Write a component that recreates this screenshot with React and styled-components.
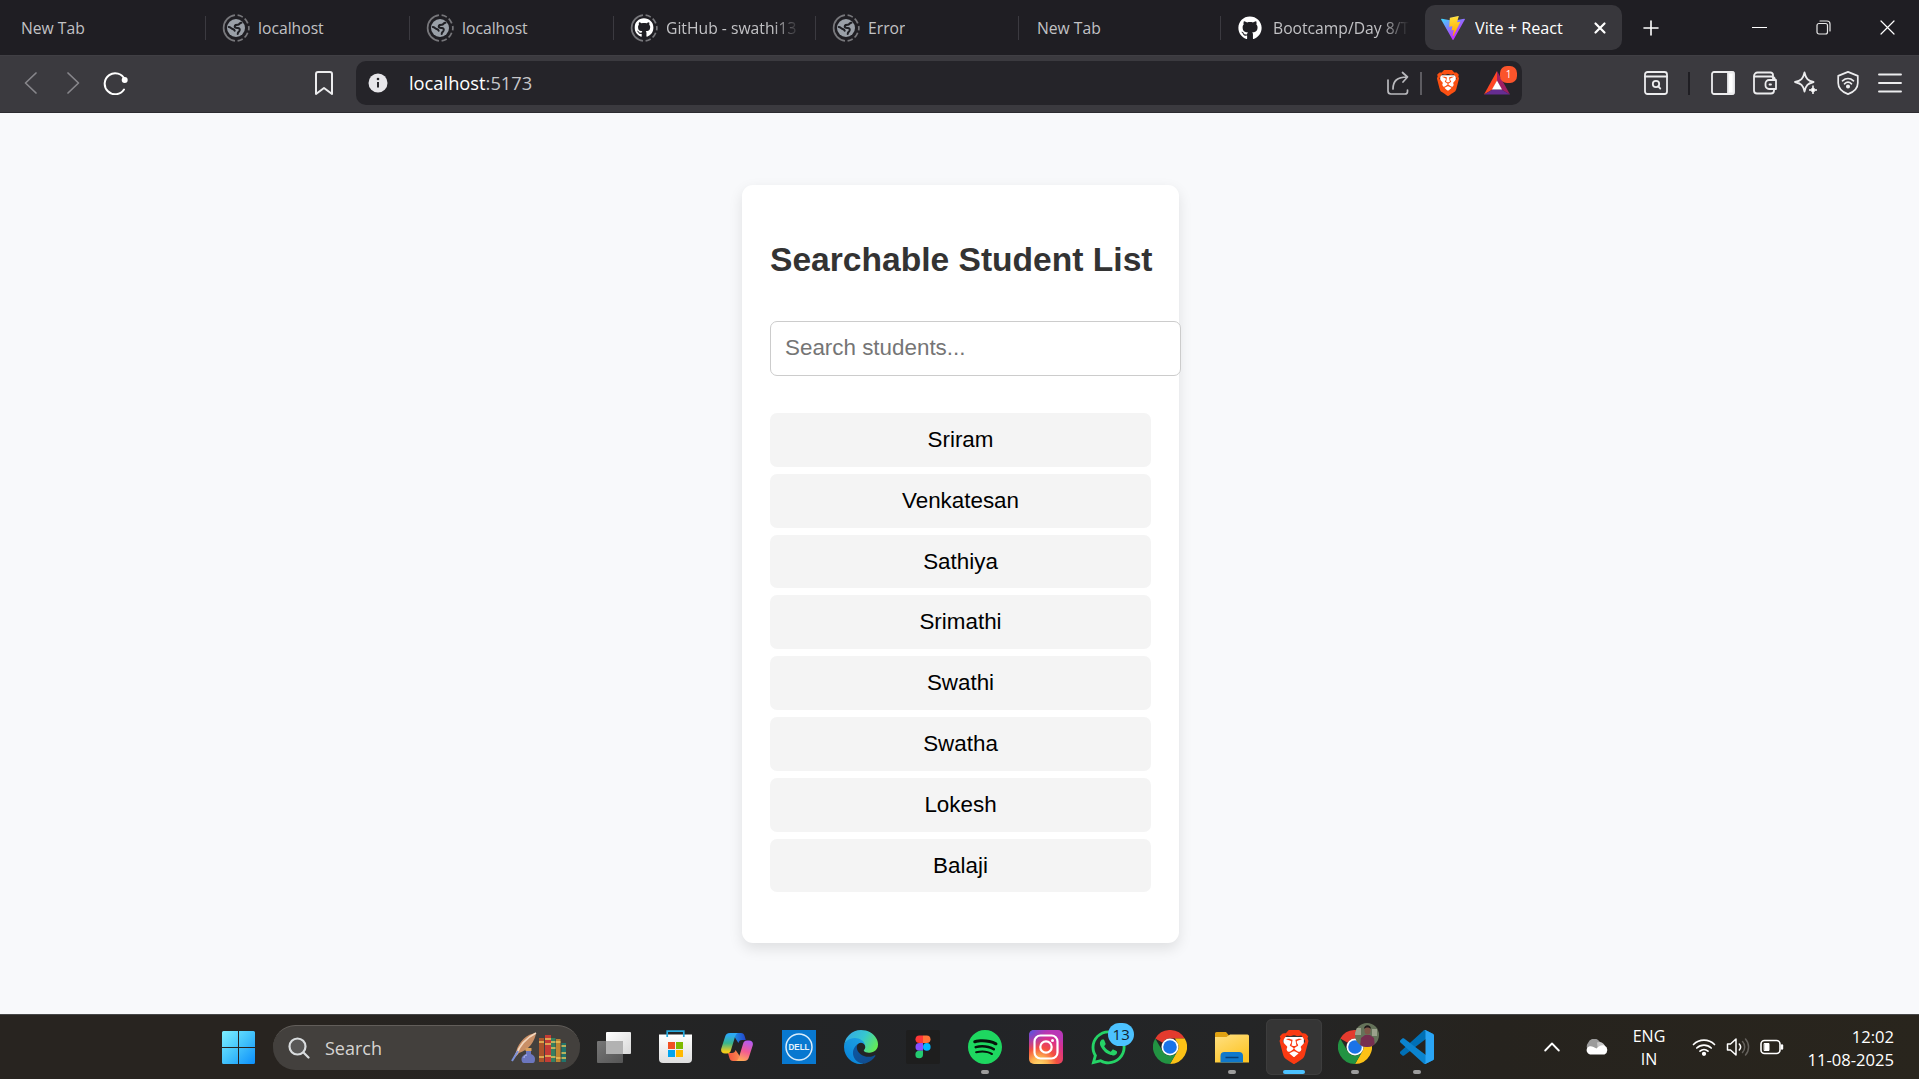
import React, { useState } from "react";
import styled, { createGlobalStyle, css } from "styled-components";
import { FaGithub, FaWhatsapp } from "react-icons/fa";
import { SiBrave, SiSpotify } from "react-icons/si";

const GlobalStyle = createGlobalStyle`
  * { box-sizing: border-box; }
  body { margin: 0; overflow: hidden; }
  svg { display: block; flex-shrink: 0; }
`;

const Screen = styled.div`
  width: 1919px;
  height: 1079px;
  display: flex;
  flex-direction: column;
  background: #f8f9fb;
  font-family: "Open Sans", "Noto Sans", sans-serif;
  overflow: hidden;
`;

/* ---------- Browser tabs ---------- */

const TabStrip = styled.div`
  height: 55px;
  flex-shrink: 0;
  display: flex;
  align-items: center;
  background: #1f1e23;
`;

const Tab = styled.div`
  width: ${(p) => p.$width || 203}px;
  height: 24px;
  flex-shrink: 0;
  display: flex;
  align-items: center;
  padding-left: ${(p) => p.$inset || 16}px;
  gap: ${(p) => p.$gap || 8}px;
  border-right: ${(p) => (p.$last ? "0" : "1px solid #3b3a40")};
  color: #c2c2c5;
`;

const fade = css`
  mask-image: linear-gradient(90deg, #000 80%, transparent 100%);
`;

const TabTitle = styled.span`
  font-size: 15.7px;
  line-height: 24px;
  white-space: nowrap;
  overflow: hidden;
  width: ${(p) => (p.$width ? `${p.$width}px` : "auto")};
  ${(p) => p.$width && fade}
`;

const ActiveTab = styled.div`
  width: 197px;
  height: 45px;
  margin-left: 1px;
  padding: 0 14px 0 16px;
  display: flex;
  align-items: center;
  gap: 10px;
  border-radius: 10px;
  background: #38373c;
  color: #fff;
  span { font-size: 16.2px; }
  svg:last-child { margin-left: auto; }
`;

const NewTabButton = styled.div`
  width: 58px;
  display: flex;
  justify-content: center;
`;

const WindowControls = styled.div`
  margin-left: auto;
  display: flex;
  > div { width: 64px; height: 40px; display: flex; align-items: center; justify-content: center; }
`;

/* ---------- Address toolbar ---------- */

const Toolbar = styled.div`
  height: 58px;
  flex-shrink: 0;
  display: flex;
  align-items: center;
  background: #3b3a3f;
  border-top: 1px solid #403f44;
  border-bottom: 1px solid #2c2b30;
  padding: 0 17px 2px 19px;
`;

const NavButtons = styled.div`
  display: flex;
  align-items: center;
  gap: 18px;
`;

const BookmarkSlot = styled.div`
  margin-left: 184.5px;
`;

const AddressBar = styled.div`
  width: 1166px;
  height: 44px;
  margin-left: 21.5px;
  padding: 0 12px 0 12px;
  display: flex;
  align-items: center;
  border-radius: 10px;
  background: #252429;
`;

const Url = styled.span`
  margin-left: 21px;
  font-size: 18.3px;
  line-height: 24px;
  color: #fff;
  em { font-style: normal; color: #c7c7ca; }
`;

const AddressActions = styled.div`
  margin-left: auto;
  display: flex;
  align-items: center;
`;

const ThinRule = styled.div`
  width: ${(p) => p.$thick || 1}px;
  height: 23px;
  margin: 0 ${(p) => p.$right}px 0 ${(p) => p.$left}px;
  background: ${(p) => p.$color};
`;

const BatIcon = styled.div`
  position: relative;
  margin-left: 23px;
  width: 26px;
  height: 24px;
`;

const BatBadge = styled.span`
  position: absolute;
  top: -5px;
  right: -7px;
  width: 17px;
  height: 17px;
  border-radius: 7px;
  background: #fb542b;
  color: #fff;
  font-size: 10px;
  line-height: 17px;
  text-align: center;
`;

const ToolbarActions = styled.div`
  margin-left: auto;
  display: flex;
  align-items: center;
`;

const ActionIcons = styled.div`
  display: flex;
  align-items: center;
  gap: 17.8px;
`;

/* ---------- Page ---------- */

const Page = styled.main`
  flex: 1;
  display: flex;
  justify-content: center;
  align-items: flex-start;
  padding: 72px 0 0 2px;
  background: #f8f9fb;
  font-family: "Liberation Sans", Arial, sans-serif;
`;

const Card = styled.section`
  width: 437px;
  height: 758px;
  padding: 55px 28px 0;
  border-radius: 11px;
  background: #fff;
  box-shadow: 0 5.6px 14px rgba(0, 0, 0, 0.1);
`;

const Heading = styled.h2`
  margin: 0;
  font-size: 33.6px;
  line-height: 40px;
  letter-spacing: 0;
  color: #333;
  text-align: center;
  white-space: nowrap;
`;

const SearchInput = styled.input`
  display: block;
  width: 411px;
  height: 55px;
  margin: 41px 0 37px;
  padding: 0 14px 1px;
  border: 1px solid #ccc;
  border-radius: 7px;
  background: #fff;
  font: 22.4px "Liberation Sans", Arial, sans-serif;
  color: #000;
  outline: none;
  &::placeholder { color: #757575; }
`;

const StudentList = styled.ul`
  margin: 0;
  padding: 0;
  list-style: none;
  display: flex;
  flex-direction: column;
  gap: 7px;
`;

const Student = styled.li`
  height: 53.8px;
  border-radius: 7px;
  background: #f4f4f4;
  font-size: 22.4px;
  line-height: 53px;
  text-align: center;
  color: #000;
`;

/* ---------- Taskbar ---------- */

const Taskbar = styled.footer`
  height: 65px;
  flex-shrink: 0;
  display: flex;
  align-items: center;
  padding: 0 25px 0 222px;
  border-top: 1px solid #474747;
  background: linear-gradient(90deg, #282420 0%, #282420 17%, #242424 32%, #222427 50%, #242526 65%, #26231e 78%, #29251d 100%);
  color: #fff;
`;

const SearchPill = styled.div`
  width: 307px;
  height: 45px;
  margin-left: 18px;
  padding: 0 13px 0 15px;
  display: flex;
  align-items: center;
  gap: 15px;
  border-radius: 23px;
  border-top: 1px solid #625e5a;
  background: #43403d;
  color: #d6d4d2;
  font-size: 18px;
  svg:last-child { margin-left: auto; }
`;

const Apps = styled.div`
  display: flex;
  margin-left: 3px;
`;

const AppSlot = styled.div`
  position: relative;
  width: 55.8px;
  height: 56px;
  margin: 0 3px;
  display: flex;
  align-items: center;
  justify-content: center;
  border-radius: 6px;
  background: ${(p) => (p.$active ? "#353535" : "transparent")};
  box-shadow: ${(p) => (p.$active ? "inset 0 0 0 1px #3d3d3d" : "none")};
`;

const RunningMark = styled.span`
  position: absolute;
  bottom: 1px;
  left: 50%;
  transform: translateX(-50%);
  width: ${(p) => (p.$wide ? 22 : 8)}px;
  height: 4px;
  border-radius: 2px;
  background: ${(p) => (p.$wide ? "#4cc2ff" : "#9d9d9d")};
`;

const CountBadge = styled.span`
  position: absolute;
  top: 4px;
  right: 2px;
  width: 26px;
  height: 23px;
  border-radius: 12px;
  background: #4cc2ff;
  color: #12222c;
  font-size: 15px;
  line-height: 22px;
  text-align: center;
`;

const Avatar = styled.svg`
  position: absolute;
  top: 4px;
  right: 4px;
`;

const BraveLogo = styled.div`
  position: relative;
  display: flex;
  width: ${(p) => p.$size}px;
  height: ${(p) => p.$size}px;
  color: ${(p) => p.$color};
  &::before {
    content: "";
    position: absolute;
    inset: 20% 20% 14%;
    background: #fff;
    clip-path: polygon(0 0, 100% 0, 100% 50%, 50% 100%, 0 50%);
  }
  svg { position: relative; }
`;

const Tray = styled.div`
  margin-left: auto;
  display: flex;
  align-items: center;
`;

const Overflow = styled.div`
  margin-right: 25px;
`;

const TwoLines = styled.div`
  width: ${(p) => p.$width}px;
  margin-left: ${(p) => p.$left}px;
  padding-top: 2px;
  font-size: ${(p) => p.$size || 16}px;
  line-height: 23px;
  text-align: ${(p) => p.$align};
  white-space: nowrap;
`;

const TrayIcons = styled.div`
  display: flex;
  align-items: center;
  gap: 10px;
  margin-left: 26px;
`;

/* ---------- Icons ---------- */

const Stroke = ({ w = 24, h = 24, color = "#ececee", sw = 1.8, children, ...rest }) => (
  <svg width={w} height={h} viewBox={`0 0 ${w} ${h}`} fill="none" stroke={color} strokeWidth={sw} strokeLinecap="round" strokeLinejoin="round" {...rest}>
    {children}
  </svg>
);

const Ring = () => (
  <g fill="none" stroke="#77777b" strokeWidth="1.7">
    <path d="M13 1.1A13 13 0 0 0 13 26.9" />
    <path d="M15.6 1.2a13 13 0 0 1 5.2 1.9M22.7 4.6a13 13 0 0 1 3.1 4.8M26.7 12a13 13 0 0 1 0 4.3M25.7 18.8a13 13 0 0 1-3.1 4.7M20.7 25a13 13 0 0 1-5.1 1.9" />
  </g>
);

const GlobeFavicon = () => (
  <svg width="28" height="28" viewBox="0 0 28 28">
    <Ring />
    <circle cx="14" cy="14" r="9" fill="#9aa0a8" />
    <g fill="none" stroke="#202025" strokeWidth="2" strokeLinecap="round" strokeLinejoin="round">
      <path d="M19.500 8.800c-1.800-.4-2 1.900-3.500 1.900-1.800 0-3.300.3-3.300 1.800s1.800 1.300 3.300 1.500c1.900.3 2.200 1.800 1.400 3-.8 1.100-1.600 1.400-1.700 3" />
      <path d="M6.800 13c1.700 0 2 1.200 3.300 1.800 1.300.5 2.300.6 2.600 1.900" />
    </g>
  </svg>
);

const GithubRing = () => (
  <svg width="28" height="28" viewBox="0 0 28 28">
    <Ring />
    <FaGithub x="4.3" y="4" size={19.5} color="#fff" />
  </svg>
);

const ViteIcon = () => (
  <svg width="24" height="24" viewBox="0 0 256 257">
    <defs>
      <linearGradient id="viteA" x1="0%" x2="57%" y1="8%" y2="79%"><stop offset="0" stopColor="#41d1ff" /><stop offset="1" stopColor="#bd34fe" /></linearGradient>
      <linearGradient id="viteB" x1="43%" x2="50%" y1="2%" y2="89%"><stop offset="0" stopColor="#ffea83" /><stop offset=".08" stopColor="#ffdd35" /><stop offset="1" stopColor="#ffa800" /></linearGradient>
    </defs>
    <path fill="url(#viteA)" d="M255.153 37.938L134.897 252.976c-2.483 4.44-8.862 4.466-11.382.048L.875 37.958c-2.746-4.814 1.371-10.646 6.827-9.67l120.385 21.517a6.537 6.537 0 0 0 2.322-.004l117.867-21.483c5.438-.991 9.574 4.796 6.877 9.62Z" />
    <path fill="url(#viteB)" d="M185.432.063L96.44 17.501a3.268 3.268 0 0 0-2.634 3.014l-5.474 92.456a3.268 3.268 0 0 0 3.997 3.378l24.777-5.718c2.318-.535 4.413 1.507 3.936 3.838l-7.361 36.047c-.495 2.426 1.782 4.5 4.151 3.78l15.304-4.649c2.372-.72 4.652 1.36 4.15 3.788l-11.698 56.621c-.732 3.542 3.979 5.473 5.943 2.437l1.313-2.028l72.516-144.72c1.215-2.423-.88-5.186-3.54-4.672l-25.505 4.922c-2.396.462-4.435-1.77-3.759-4.114l16.646-57.705c.677-2.35-1.37-4.583-3.769-4.113Z" />
  </svg>
);

const WindowsLogo = () => (
  <svg width="33" height="33" viewBox="0 0 33 33">
    <defs><linearGradient id="win" gradientUnits="userSpaceOnUse" x1="0" y1="0" x2="33" y2="33"><stop stopColor="#7df0ff" /><stop offset=".5" stopColor="#43c3fb" /><stop offset="1" stopColor="#0c8ffc" /></linearGradient></defs>
    <path fill="url(#win)" d="M1.5 0H16v16H0V1.500a1.500 1.500 0 0 1 1.500-1.500zM17 0h14.500a1.500 1.500 0 0 1 1.500 1.500V16H17zM0 17h16v16H1.500a1.500 1.500 0 0 1-1.500-1.500zM17 17h16v14.500a1.500 1.500 0 0 1-1.500 1.500H17z" />
  </svg>
);

const QuillAndBooks = () => (
  <svg width="56" height="32" viewBox="0 0 56 32">
    <path d="M1 29L5 20C8 9 16 2 25 1c-1 8-7 17-17 20z" fill="#c98f66" />
    <path d="M25 1C15 6 8 15 5 23" stroke="#f2d6be" strokeWidth="1.800" fill="none" />
    <path d="M1 29l6-10" stroke="#7b90d8" strokeWidth="2" />
    <rect x="14.500" y="16" width="6" height="3" fill="#d9a05c" />
    <path d="M15 19h5v3c3 1 4 3 4 5 0 3-1 4-2 4h-9c-2 0-2.500-2-2.500-4s1.500-4 4.500-5z" fill="#6c76be" />
    <path d="M13 26c0-2 1-3 3-3" stroke="#b6bff2" fill="none" />
    <rect x="28" y="6" width="5" height="24" fill="#ac552b" />
    <rect x="34" y="3" width="6" height="27" fill="#c43c35" />
    <rect x="40" y="6" width="4.500" height="24" fill="#377f60" />
    <rect x="45" y="7" width="4.500" height="23" fill="#bd8432" />
    <rect x="50.500" y="11" width="4.500" height="19" fill="#21746b" />
    <path d="M28 10h5M28 25h5M34 7h6M34 12h6M34 24h6M40 10h4.500M40 16h4.500M40 25h4.500M45 10h4.500M45 26h4.500M50.500 14h4.500M50.500 21h4.500M50.500 26h4.500" stroke="#ecc45b" strokeWidth="1.600" />
  </svg>
);

const TaskView = () => (
  <svg width="34" height="34" viewBox="0 0 34 34">
    <defs>
      <linearGradient id="tvA" x1="0" y1="0" x2="1" y2="1"><stop stopColor="#fff" /><stop offset="1" stopColor="#d8d8d8" /></linearGradient>
      <linearGradient id="tvB" x1="0" y1="0" x2="1" y2="1"><stop stopColor="#777" /><stop offset="1" stopColor="#555" /></linearGradient>
    </defs>
    <rect x="9" y="2" width="25" height="22" rx="1" fill="url(#tvA)" />
    <rect x="0" y="11" width="26" height="22" rx="1" fill="url(#tvB)" />
    <path d="M9 11h17v13H9z" fill="#b2b2b2" />
  </svg>
);

const StoreIcon = () => (
  <svg width="33" height="34" viewBox="0 0 33 34">
    <defs><linearGradient id="store" x1="0" y1="0" x2="0" y2="1"><stop stopColor="#fff" /><stop offset="1" stopColor="#dedede" /></linearGradient></defs>
    <path d="M0 4.500h33V29a4 4 0 0 1-4 4H4a4 4 0 0 1-4-4z" fill="url(#store)" />
    <path d="M8.200 7V1.200h16.600V7" fill="none" stroke="#27a9dd" strokeWidth="1.700" />
    <path fill="#f25022" d="M9 12h7v7H9z" /><path fill="#7fba00" d="M17 12h7v7h-7z" />
    <path fill="#00a4ef" d="M9 20h7v7H9z" /><path fill="#ffb900" d="M17 20h7v7h-7z" />
  </svg>
);

const CopilotIcon = () => (
  <svg width="32" height="30" viewBox="0 0 32 30">
    <defs>
      <linearGradient id="cpA" x1="0" y1="0" x2="0" y2="1"><stop offset=".1" stopColor="#2ca9f4" /><stop offset=".5" stopColor="#39b58d" /><stop offset=".9" stopColor="#f1cb1b" /></linearGradient>
      <linearGradient id="cpB" x1=".6" y1="0" x2=".3" y2="1"><stop stopColor="#b45bf0" /><stop offset=".5" stopColor="#f25b94" /><stop offset="1" stopColor="#ffac55" /></linearGradient>
      <linearGradient id="cpC" x1="0" y1="0" x2="1" y2="0"><stop stopColor="#1ba7ec" /><stop offset="1" stopColor="#2444cc" /></linearGradient>
      <linearGradient id="cpD" x1="0" y1="0" x2="1" y2="0"><stop stopColor="#f5523e" /><stop offset="1" stopColor="#f8a057" /></linearGradient>
    </defs>
    <path d="M9 1h11c2 0 3 1 3.600 3l1.200 4H21c-2 0-3 1-3.600 3L13 4z" fill="url(#cpC)" />
    <path d="M23 29H12c-2 0-3-1-3.600-3L7 21h4c2 0 3-1 3.600-3L20 26z" fill="url(#cpD)" />
    <path d="M9 1h8c-2 1-2.500 2-3.200 4.500L10 18c-.7 2-1.500 3.500-4 3.500H4c-3 0-4.500-2-3.700-5L4 5c.8-2.500 2-4 5-4z" fill="url(#cpA)" />
    <path d="M23 29h-8c2-1 2.500-2 3.200-4.500L22 12c.7-2 1.500-3.500 4-3.500h2c3 0 4.500 2 3.700 5L28 25c-.8 2.500-2 4-5 4z" fill="url(#cpB)" />
  </svg>
);

const DellIcon = () => (
  <svg width="34" height="34" viewBox="0 0 34 34">
    <path fill="#0878d0" d="M0 0h34v34H0z" />
    <circle cx="17" cy="17" r="13" fill="none" stroke="#d9ecfb" strokeWidth="1.500" />
    <text x="17" y="20.200" textAnchor="middle" textLength="21" lengthAdjust="spacingAndGlyphs" fontFamily="Liberation Sans" fontWeight="700" fontSize="9" fill="#e6f3fd">DELL</text>
  </svg>
);

const EdgeIcon = () => (
  <svg width="34" height="34" viewBox="0 0 256 256">
    <defs>
      <linearGradient id="edA" x1=".2" y1="0" x2="1" y2="1"><stop stopColor="#0c59a4" /><stop offset="1" stopColor="#114a8b" /></linearGradient>
      <linearGradient id="edB" x1=".8" y1=".2" x2=".2" y2="1"><stop stopColor="#1b9de2" /><stop offset=".4" stopColor="#1595df" /><stop offset="1" stopColor="#0680d7" /></linearGradient>
      <linearGradient id="edC" x1="0" y1=".3" x2="1" y2=".7"><stop stopColor="#35a9e4" /><stop offset=".5" stopColor="#36c7d0" /><stop offset="1" stopColor="#66eb50" /></linearGradient>
    </defs>
    <path fill="url(#edA)" d="M231 190.500c-3.400 1.800-6.900 3.400-10.500 4.700a101.500 101.500 0 0 1-35.900 6.400c-47.300 0-88.500-32.500-88.500-74.300a31.500 31.500 0 0 1 16.400-27.300c-42.800 1.800-53.800 46.400-53.800 72.500 0 74 68.100 81.400 82.800 81.400 7.900 0 19.800-2.300 27-4.600l1.300-.4a128.300 128.300 0 0 0 66.600-52.800 4 4 0 0 0-5.400-5.600z" />
    <path fill="url(#edB)" d="M105.700 241.400a79.200 79.200 0 0 1-22.700-21.300 80.700 80.700 0 0 1 29.500-120c3.200-1.500 8.500-4.100 15.600-4a32.400 32.400 0 0 1 25.700 13 31.900 31.900 0 0 1 6.300 18.700c0-.2 24.500-79.600-80-79.600-43.900 0-80 41.600-80 78.200a130.200 130.200 0 0 0 12.100 56 128 128 0 0 0 156.400 67 75.500 75.500 0 0 1-62.800-8z" />
    <path fill="url(#edC)" d="M152.300 148.900c-.8 1-3.300 2.500-3.300 5.700 0 2.600 1.700 5.100 4.700 7.200 14.400 10 41.500 8.700 41.600 8.700 10.700 0 21.100-2.900 30.300-8.300a61.400 61.400 0 0 0 30.400-52.900c.3-22.400-8-37.300-11.300-43.900C223.500 23.900 177.700 0 128 0A128 128 0 0 0 0 126.200c.5-36.500 36.800-66 80-66 3.500 0 23.500.3 42 10.100 16.300 8.600 24.900 19 30.800 29.300 6.200 10.700 7.300 24.100 7.300 29.500s-2.700 13.300-7.800 19.800z" />
  </svg>
);

const FigmaIcon = () => (
  <svg width="34" height="34" viewBox="0 0 34 34">
    <rect width="34" height="34" rx="2" fill="#1e1e1e" />
    <path fill="#ff3737" d="M17 5.500h-3.700a3.800 3.800 0 0 0 0 7.600H17z" />
    <path fill="#ff7237" d="M17 5.500h3.700a3.800 3.800 0 0 1 0 7.600H17z" />
    <path fill="#874fff" d="M17 13.100h-3.700a3.800 3.800 0 0 0 0 7.600H17z" />
    <circle cx="20.800" cy="16.900" r="3.800" fill="#00b6ff" />
    <path fill="#24cb71" d="M17 20.700h-3.700a3.800 3.800 0 1 0 3.700 3.800z" />
  </svg>
);

const SpotifyIcon = () => (
  <svg width="34" height="34" viewBox="0 0 34 34">
    <circle cx="17" cy="17" r="15.500" fill="#06140b" />
    <SiSpotify size={34} color="#1ed760" />
  </svg>
);

const InstagramIcon = () => (
  <svg width="34" height="34" viewBox="0 0 34 34">
    <defs>
      <radialGradient id="igA" cx=".3" cy="1.05" r="1.05"><stop stopColor="#ffdf72" /><stop offset=".25" stopColor="#fdb04f" /><stop offset=".5" stopColor="#f4503f" /><stop offset=".8" stopColor="#d9308e" /><stop offset="1" stopColor="#b837b7" /></radialGradient>
      <radialGradient id="igB" cx="0" cy="0" r=".6"><stop stopColor="#4a5ae0" /><stop offset="1" stopColor="#8a40d0" stopOpacity="0" /></radialGradient>
    </defs>
    <rect width="34" height="34" rx="5" fill="url(#igA)" />
    <rect width="34" height="34" rx="5" fill="url(#igB)" />
    <g fill="none" stroke="#fff" strokeWidth="2.200"><rect x="5.500" y="5.500" width="23" height="23" rx="6" /><circle cx="17" cy="17" r="5.700" /></g>
    <circle cx="23.500" cy="10.500" r="1.500" fill="#fff" />
  </svg>
);

const ChromeIcon = () => (
  <svg width="34" height="34" viewBox="0 0 48 48">
    <path fill="#e33b2e" d="M3.200 12A24 24 0 0 1 44.800 12H24A12 12 0 0 0 13.600 18z" />
    <path fill="#fbc116" d="M44.800 12A24 24 0 0 1 24 48l10.400-18A12 12 0 0 0 34.400 18L31 12z" />
    <path fill="#229342" d="M24 48A24 24 0 0 1 3.200 12l10.400 18a12 12 0 0 0 20.800 0z" />
    <circle cx="24" cy="24" r="12" fill="#fff" /><circle cx="24" cy="24" r="9.600" fill="#1a73e8" />
  </svg>
);

const FolderIcon = () => (
  <svg width="34" height="34" viewBox="0 0 34 34">
    <defs><linearGradient id="fo" x1="0" y1="0" x2=".6" y2="1"><stop stopColor="#ffe083" /><stop offset="1" stopColor="#fdc526" /></linearGradient></defs>
    <path d="M0 3.500A1.500 1.500 0 0 1 1.500 2H11l3 3.500V12H0z" fill="#dfa112" />
    <path d="M0 7h11.500L15 4.500h17.500A1.500 1.500 0 0 1 34 6v26.500H0z" fill="url(#fo)" />
    <path d="M5.500 32.500V26a4 4 0 0 1 4-4H24a4 4 0 0 1 4 4v6.500z" fill="#1079cb" />
    <path d="M10.500 27.500h13" stroke="#083f73" strokeWidth="1.500" />
  </svg>
);

const VsCodeIcon = () => (
  <svg width="34" height="34" viewBox="0 0 100 100">
    <path fill="#0070b6" d="M96.461 10.796L75.857.876c-2.385-1.149-5.235-.664-7.107 1.207L1.299 63.583c-1.815 1.654-1.813 4.511.004 6.162l5.510 5.009c1.485 1.350 3.722 1.450 5.321.237l81.227-61.621C96.086 11.303 100 13.246 100 16.667v-.240c0-2.400-1.375-4.589-3.539-5.631z" />
    <path fill="#0b84cf" d="M96.461 89.204l-20.604 9.920c-2.385 1.149-5.235.664-7.107-1.207L1.299 36.417c-1.815-1.654-1.813-4.511.004-6.162l5.510-5.009c1.485-1.350 3.722-1.450 5.321-.237l81.227 61.621C96.086 88.697 100 86.754 100 83.333v.240c0 2.400-1.375 4.589-3.539 5.631z" />
    <path fill="#2aa5f5" d="M75.858 99.126c-2.386 1.148-5.236.663-7.108-1.209C71.056 100.223 75 98.590 75 95.328V4.672c0-3.262-3.944-4.895-6.250-2.589 1.872-1.872 4.722-2.357 7.108-1.209l20.601 9.907C98.623 11.822 100 14.011 100 16.413v67.174c0 2.402-1.377 4.592-3.541 5.633z" />
  </svg>
);

const Brave = ({ size, color }) => (
  <BraveLogo $size={size} $color={color}><SiBrave size={size} /></BraveLogo>
);

/* ---------- Data ---------- */

const STUDENTS = ["Sriram", "Venkatesan", "Sathiya", "Srimathi", "Swathi", "Swatha", "Lokesh", "Balaji"];

const APPS = [
  { id: "task-view", icon: <TaskView /> },
  { id: "store", icon: <StoreIcon /> },
  { id: "copilot", icon: <CopilotIcon /> },
  { id: "dell", icon: <DellIcon /> },
  { id: "edge", icon: <EdgeIcon /> },
  { id: "figma", icon: <FigmaIcon /> },
  { id: "spotify", icon: <SpotifyIcon />, running: true },
  { id: "instagram", icon: <InstagramIcon /> },
  { id: "whatsapp", icon: <FaWhatsapp size={39} color="#25d366" />, count: 13 },
  { id: "chrome", icon: <ChromeIcon /> },
  { id: "explorer", icon: <FolderIcon />, running: true },
  { id: "brave", icon: <Brave size={34} color="#fb3a12" />, running: true, active: true },
  { id: "chrome-profile", icon: <ChromeIcon />, running: true, avatar: true },
  { id: "vscode", icon: <VsCodeIcon />, running: true },
];

function BrowserTabs() {
  return (
    <TabStrip>
      <Tab $width={206} $inset={21}><TabTitle>New Tab</TabTitle></Tab>
      <Tab $width={204}><GlobeFavicon /><TabTitle>localhost</TabTitle></Tab>
      <Tab $width={204}><GlobeFavicon /><TabTitle>localhost</TabTitle></Tab>
      <Tab $width={202}><GithubRing /><TabTitle $width={134}>GitHub - swathi13</TabTitle></Tab>
      <Tab $width={203}><GlobeFavicon /><TabTitle>Error</TabTitle></Tab>
      <Tab $width={202} $inset={18}><TabTitle>New Tab</TabTitle></Tab>
      <Tab $width={203} $inset={17} $gap={11} $last>
        <FaGithub size={24} color="#fff" /><TabTitle $width={136}>Bootcamp/Day 8/T</TabTitle>
      </Tab>
      <ActiveTab>
        <ViteIcon /><TabTitle>Vite + React</TabTitle>
        <Stroke w={16} h={16} color="#fff" sw={2.2}><path d="M3.500 3.500l9 9M12.500 3.500l-9 9" /></Stroke>
      </ActiveTab>
      <NewTabButton><Stroke w={16} h={16} color="#fff" sw={1.6}><path d="M8 1v14M1 8h14" /></Stroke></NewTabButton>
      <WindowControls>
        <div><Stroke w={15} h={15} color="#fff" sw={1.2}><path d="M.5 7.500h14" /></Stroke></div>
        <div><Stroke w={15} h={15} color="#e8e8e8" sw={1.2}><rect x="1" y="3.500" width="10.500" height="10.500" rx="2" /><path d="M4 1h7a3 3 0 0 1 3 3v7" /></Stroke></div>
        <div><Stroke w={15} h={15} color="#fff" sw={1.2}><path d="M1 1l13 13M14 1L1 14" /></Stroke></div>
      </WindowControls>
    </TabStrip>
  );
}

function AddressToolbar() {
  return (
    <Toolbar>
      <NavButtons>
        <Stroke color="#87868b" sw={1.7}><path d="M17 2L6.500 12 17 22" /></Stroke>
        <Stroke color="#87868b" sw={1.7}><path d="M7 2l10.500 10L7 22" /></Stroke>
        <Stroke w={25} color="#fff" sw={2}><path d="M21 18.500A10.500 10.500 0 1 1 21.800 8.500" /><circle cx="21.700" cy="9" r="2" fill="#fff" /></Stroke>
      </NavButtons>
      <BookmarkSlot>
        <Stroke w={22} h={26} sw={2}><path d="M3 4a2 2 0 0 1 2-2h12a2 2 0 0 1 2 2v20l-8-6-8 6z" /></Stroke>
      </BookmarkSlot>
      <AddressBar>
        <svg width="20" height="20" viewBox="0 0 20 20"><circle cx="10" cy="10" r="9.500" fill="#e7e6ea" /><path d="M10 9v5.500" stroke="#29282d" strokeWidth="2" /><circle cx="10" cy="6" r="1.300" fill="#29282d" /></svg>
        <Url>localhost<em>:5173</em></Url>
        <AddressActions>
          <Stroke color="#b9b9bd" sw={1.7}><path d="M2 9v11a3 3 0 0 0 3 3h14a2.500 2.500 0 0 0 2.500-2.500V19M7 18c0-8 4-12 14-12M16.500 1.500L21.500 6l-4.500 5" /></Stroke>
          <ThinRule $thick={2} $left={10} $right={13} $color="#5d5c61" />
          <Brave size={26} color="#fb5012" />
          <BatIcon>
            <svg width="26" height="24" viewBox="0 0 26 24"><path d="M13 0L0 23.500l8.500-5L13 10z" fill="#ff4724" /><path d="M13 0l13 23.500-8.500-5L13 10z" fill="#9e1f63" /><path d="M0 23.500h26l-8.500-5h-9z" fill="#662d91" /><path d="M13 9.500L8 18.500h10z" fill="#fff" /></svg>
            <BatBadge>1</BatBadge>
          </BatIcon>
        </AddressActions>
      </AddressBar>
      <ToolbarActions>
        <Stroke sw={1.8}><rect x="1" y="1" width="22" height="22" rx="2.500" /><path d="M1 5.500h22" /><circle cx="12" cy="13" r="3.200" /><path d="M14.300 15.300l2 2.300" /></Stroke>
        <ThinRule $thick={2} $left={20} $right={21} $color="#1f1e23" />
        <ActionIcons>
          <Stroke sw={1.8}><rect x="1" y="1" width="22" height="22" rx="2" /><path d="M17 1.500h5.500v21H17z" fill="#fff" /></Stroke>
          <Stroke sw={1.8}><path d="M20 8V4a2.500 2.500 0 0 0-2.500-2.500h-13A3.500 3.500 0 0 0 1 5v14.500A3 3 0 0 0 4 22.500h14a3 3 0 0 0 3-3V19M1 5.500h17a4 4 0 0 1 4 3" /><path d="M23 9h-7a3.500 3.500 0 0 0-3.500 3.500v2A3.500 3.500 0 0 0 16 18h7zM16.500 13.500h1.500" /></Stroke>
          <Stroke sw={1.8}><path d="M10.500 1.500c1.300 6 3.500 8.200 9 9.500-5.500 1.300-7.700 3.500-9 9.500C9.200 14.500 7 12.300 1 11c6-1.300 8.200-3.500 9.500-9.500z" /><path d="M19 15c.7 2.800 1.200 3.300 4 4-2.800.7-3.300 1.200-4 4-.7-2.800-1.200-3.300-4-4 2.800-.7 3.300-1.200 4-4z" fill="#fff" strokeWidth="1" /></Stroke>
          <Stroke sw={1.7}><path d="M12 .9l9.800 4v7c0 5.600-4.300 9.100-9.800 11.200C6.500 21 2.200 17.500 2.200 11.900v-7z" /><path d="M6.500 9.800c3.300-3 7.700-3 11 0M8.500 12.800c2.200-2 4.800-2 7 0" /><circle cx="12" cy="15.500" r="1.200" fill="#fff" /></Stroke>
          <Stroke sw={1.9}><path d="M1 3.500h22M1 12h22M1 20.500h22" /></Stroke>
        </ActionIcons>
      </ToolbarActions>
    </Toolbar>
  );
}

function StudentSearch() {
  const [query, setQuery] = useState("");
  const shown = STUDENTS.filter((s) => s.toLowerCase().includes(query.toLowerCase()));
  return (
    <Page>
      <Card>
        <Heading>Searchable Student List</Heading>
        <SearchInput placeholder="Search students..." value={query} onChange={(e) => setQuery(e.target.value)} />
        <StudentList>{shown.map((s) => <Student key={s}>{s}</Student>)}</StudentList>
      </Card>
    </Page>
  );
}

function WindowsTaskbar() {
  return (
    <Taskbar>
      <WindowsLogo />
      <SearchPill>
        <Stroke w={22} h={22} color="#d9dcde" sw={2.2}><circle cx="9.500" cy="9.500" r="8" fill="#595857" /><path d="M15.500 15.500l5 5" /></Stroke>
        <span>Search</span>
        <QuillAndBooks />
      </SearchPill>
      <Apps>
        {APPS.map((a) => (
          <AppSlot key={a.id} $active={a.active}>
            {a.icon}
            {a.count && <CountBadge>{a.count}</CountBadge>}
            {a.avatar && (
              <Avatar width="24" height="24" viewBox="0 0 24 24">
                <clipPath id="face"><circle cx="12" cy="12" r="12" /></clipPath>
                <g clipPath="url(#face)"><path fill="#65735a" d="M0 0h24v24H0z" /><path fill="#9ba28d" d="M0 5h6v7H0zM17 6h5v7h-5z" /><path fill="#762f50" d="M5 24l1-9 4-3h5l4 3 1 9z" /><ellipse cx="12.500" cy="7.500" rx="3" ry="4" fill="#805748" /><path fill="#201a1b" d="M9 6c0-5 7-5 7 0-2-2-5-2-7 0z" /></g>
              </Avatar>
            )}
            {a.running && <RunningMark $wide={a.active} />}
          </AppSlot>
        ))}
      </Apps>
      <Tray>
        <Overflow>
          <Stroke w={16} h={16} color="#fff" sw={1.8}><path d="M1.200 11.500l6.800-7 6.800 7" /></Stroke>
        </Overflow>
        <svg width="24" height="16" viewBox="0 0 24 16">
          <path d="M5 12A5 5 0 0 1 3 4a6.500 6.500 0 0 1 11.500-1.500L19 6l-9 7z" fill="#9b9b9b" /><path d="M12 3.500a6 6 0 0 1 8 3.500l-7 4z" fill="#c6c6c6" /><path d="M5 15.500a4.500 4.500 0 0 1-2.500-7c2-2 4-1.500 6-.5l3 1.500c2-2.500 5-4 8-3a5 5 0 0 1 0 9z" fill="#fff" />
        </svg>
        <TwoLines $width={34} $left={23} $align="center">ENG<br />IN</TwoLines>
        <TrayIcons>
          <Stroke w={24} h={18} color="#fff" sw={1.7}><path d="M1.500 6.500a15 15 0 0 1 21 0M4.800 10a10.300 10.300 0 0 1 14.400 0M8 13.200a6 6 0 0 1 8 0" /><circle cx="12" cy="15.800" r="1.300" fill="#fff" /></Stroke>
          <Stroke w={24} h={20} color="#fff" sw={1.5}><path d="M1.500 7h3L10 2v16l-5.500-5h-3z" /><path d="M13.300 7a4.500 4.500 0 0 1 0 6" /><path d="M16.500 4.500a8 8 0 0 1 0 11M19.500 2a12 12 0 0 1 0 16" stroke="#65625d" /></Stroke>
          <Stroke w={24} h={16} color="#fff" sw={1.6}><rect x="1" y="1.500" width="19" height="13" rx="3.500" /><path d="M4.500 4.500H9v7H4.500z" fill="#fff" strokeWidth="1" /><path d="M22 6.500v3" strokeWidth="2.400" /></Stroke>
        </TrayIcons>
        <TwoLines $width={100} $left={10} $align="right" $size={16.6}>12:02<br />11-08-2025</TwoLines>
      </Tray>
    </Taskbar>
  );
}

export default function App() {
  return (
    <Screen>
      <GlobalStyle />
      <BrowserTabs />
      <AddressToolbar />
      <StudentSearch />
      <WindowsTaskbar />
    </Screen>
  );
}
